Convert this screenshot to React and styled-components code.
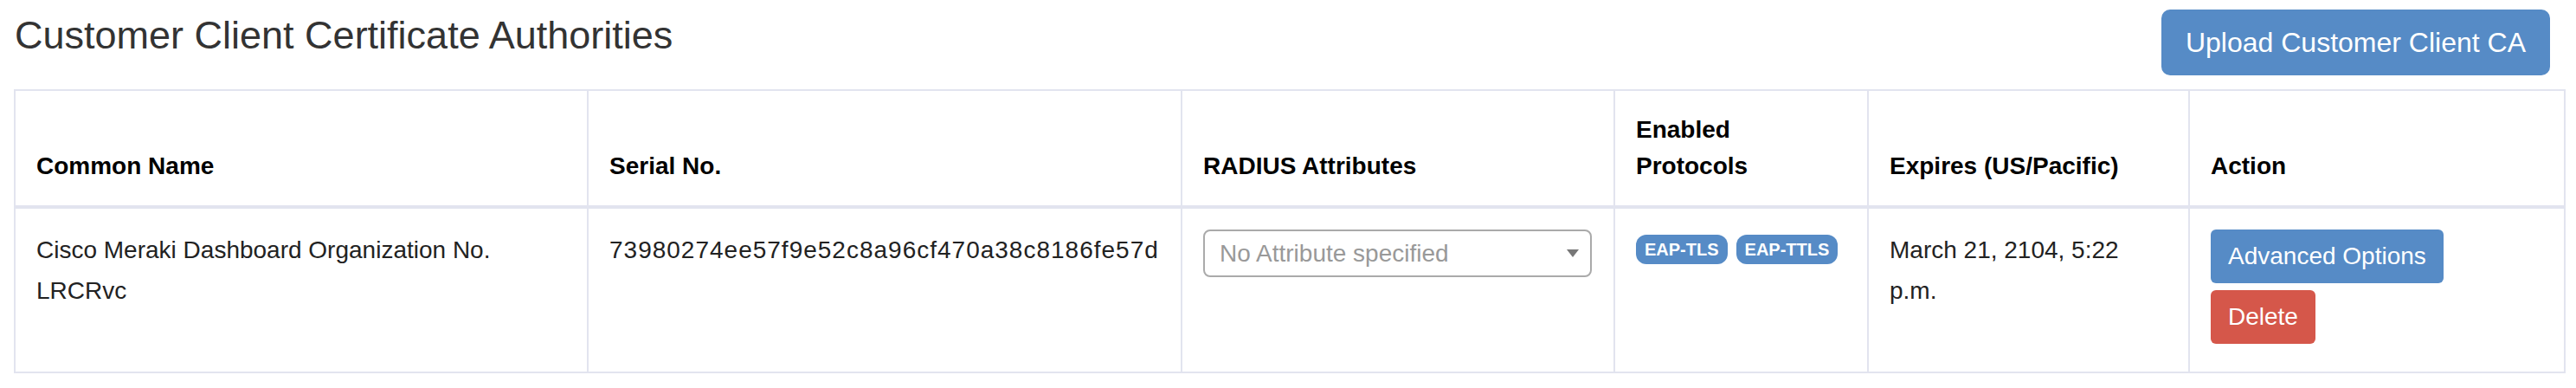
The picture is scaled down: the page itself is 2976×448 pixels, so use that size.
import React from "react";
import styled, { createGlobalStyle } from "styled-components";

const GlobalStyle = createGlobalStyle`
  html, body {
    margin: 0;
    padding: 0;
    background: #ffffff;
  }
  body {
    font-family: "Liberation Sans", Arial, Helvetica, sans-serif;
    color: #222222;
  }
`;

const Page = styled.div`
  padding: 11px 14px 16px 16px;
  box-sizing: border-box;
  width: 2976px;
`;

const TopBar = styled.div`
  display: flex;
  justify-content: space-between;
  align-items: flex-start;
  margin-bottom: 16px;
`;

const Title = styled.h2`
  margin: 4px 0 0 1px;
  font-size: 45px;
  line-height: 52px;
  font-weight: 400;
  color: #333333;
`;

const Button = styled.button`
  display: inline-flex;
  align-items: center;
  justify-content: center;
  box-sizing: border-box;
  border: none;
  color: #ffffff;
  font-family: "Liberation Sans", Arial, sans-serif;
  cursor: pointer;
  white-space: nowrap;
  background: ${(p) => (p.$variant === "danger" ? "#d5574a" : "#568bc6")};
  height: ${(p) => (p.$large ? "76px" : "62px")};
  padding: ${(p) => (p.$large ? "0 28px" : "0 20px")};
  margin: ${(p) => (p.$large ? "0 16px 0 0" : "0")};
  font-size: ${(p) => (p.$large ? "32px" : "28px")};
  border-radius: ${(p) => (p.$large ? "10px" : "6px")};
`;

const Table = styled.table`
  border-collapse: collapse;
  table-layout: fixed;
  width: 2946px;
  border: 2px solid #e2e4ef;
`;

const Col = styled.col`
  width: ${(p) => p.$w}px;
`;

const Th = styled.th`
  padding: 24px;
  text-align: left;
  vertical-align: bottom;
  font-size: 28px;
  line-height: 42px;
  font-weight: 700;
  color: #000000;
  border: 2px solid #e2e4ef;
  border-bottom-width: 4px;
`;

const Td = styled.td`
  padding: 24px;
  vertical-align: top;
  font-size: 28px;
  line-height: 47px;
  color: #222222;
  border: 2px solid #e2e4ef;
`;

const Serial = styled.span`
  letter-spacing: 1px;
`;

const SelectBox = styled.div`
  box-sizing: border-box;
  display: flex;
  align-items: center;
  justify-content: space-between;
  width: 449px;
  height: 55px;
  padding: 0 13px 0 17px;
  border: 2px solid #aaaaaa;
  border-radius: 8px;
  font-size: 28px;
  line-height: 1;
  color: #999999;
  background: #ffffff;
`;

const Caret = styled.span`
  width: 0;
  height: 0;
  border-left: 7.5px solid transparent;
  border-right: 7.5px solid transparent;
  border-top: 9px solid #777777;
`;

const Badges = styled.div`
  display: flex;
  gap: 10px;
  margin-top: 6px;
`;

const Badge = styled.span`
  display: inline-block;
  height: 34px;
  line-height: 34px;
  padding: 0 10px;
  border-radius: 12px;
  background: #568bc6;
  color: #ffffff;
  font-size: 20px;
  font-weight: 700;
`;

const Actions = styled.div`
  display: flex;
  flex-direction: column;
  align-items: flex-start;
  gap: 8px;
  padding-bottom: 8px;
`;

const columns = [662, 686, 500, 293, 371, 434];

export default function App() {
  return (
    <>
      <GlobalStyle />
      <Page>
        <TopBar>
          <Title>Customer Client Certificate Authorities</Title>
          <Button $large>Upload Customer Client CA</Button>
        </TopBar>
        <Table>
          <colgroup>
            {columns.map((w, i) => (
              <Col key={i} $w={w} />
            ))}
          </colgroup>
          <thead>
            <tr>
              <Th>Common Name</Th>
              <Th>Serial No.</Th>
              <Th>RADIUS Attributes</Th>
              <Th>
                Enabled
                <br />
                Protocols
              </Th>
              <Th>Expires (US/Pacific)</Th>
              <Th>Action</Th>
            </tr>
          </thead>
          <tbody>
            <tr>
              <Td>Cisco Meraki Dashboard Organization No. LRCRvc</Td>
              <Td>
                <Serial>73980274ee57f9e52c8a96cf470a38c8186fe57d</Serial>
              </Td>
              <Td>
                <SelectBox>
                  <span>No Attribute specified</span>
                  <Caret />
                </SelectBox>
              </Td>
              <Td>
                <Badges>
                  <Badge>EAP-TLS</Badge>
                  <Badge>EAP-TTLS</Badge>
                </Badges>
              </Td>
              <Td>March 21, 2104, 5:22 p.m.</Td>
              <Td>
                <Actions>
                  <Button>Advanced Options</Button>
                  <Button $variant="danger">Delete</Button>
                </Actions>
              </Td>
            </tr>
          </tbody>
        </Table>
      </Page>
    </>
  );
}
